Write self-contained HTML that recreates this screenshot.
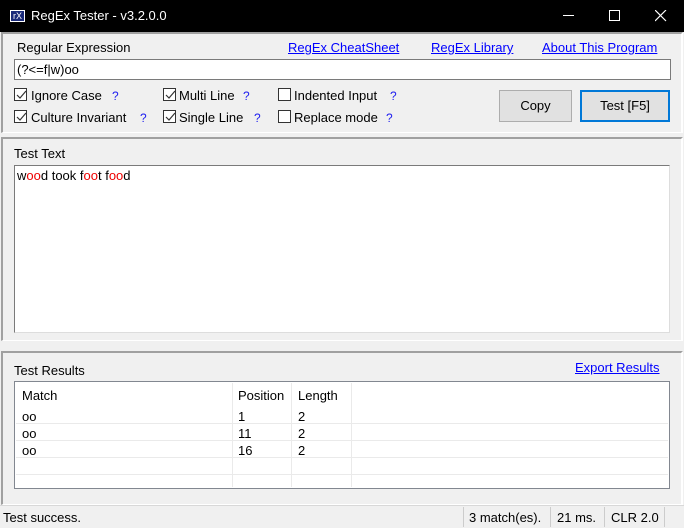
<!DOCTYPE html><html><head><style>
*{margin:0;padding:0;box-sizing:border-box}
body{width:684px;height:528px;background:#f0f0f0;font-family:"Liberation Sans",sans-serif;font-size:13px;color:#000;position:relative;overflow:hidden}
.a{position:absolute;white-space:nowrap}
.lk{color:#0000ff;text-decoration:underline}
.cb{position:absolute;width:13px;height:13px;border:1px solid #333;background:#fff}
.cb svg{position:absolute;left:1px;top:1px}
.q{color:#1c1cf0;position:absolute;font-size:12px}
.panel{position:absolute;left:1px;right:1px;border-top:2px solid #a0a0a0;border-left:2px solid #a0a0a0;border-right:2px solid #fff;border-bottom:1px solid #fff}
.row{position:absolute;left:1px;right:1px;height:17px;border-bottom:1px solid #eaeaea}
</style></head><body>
<div class="a" style="left:0;top:0;width:684px;height:32px;background:#000"></div>
<div class="a" style="left:10px;top:10px;width:15px;height:12px;border:1px solid #fff;background:#1a2a7a;color:#fff;font-size:9px;line-height:10px;text-align:center">rX</div>
<div class="a" style="left:31px;top:8px;color:#fff;font-size:13px">RegEx Tester - v3.2.0.0</div>
<div class="a" style="left:563px;top:15px;width:11px;height:1px;background:#fff"></div>
<div class="a" style="left:609px;top:10px;width:11px;height:11px;border:1px solid #fff"></div>
<svg class="a" style="left:655px;top:10px" width="12" height="12"><path d="M0 0L11 11M11 0L0 11" stroke="#fff" stroke-width="1.2"/></svg>

<div class="panel" style="top:32px;height:101px"></div>
<div class="a" style="left:17px;top:40px">Regular Expression</div>
<div class="a lk" style="left:288px;top:40px">RegEx CheatSheet</div>
<div class="a lk" style="left:431px;top:40px">RegEx Library</div>
<div class="a lk" style="left:542px;top:40px">About This Program</div>
<div class="a" style="left:14px;top:59px;width:657px;height:21px;border:1px solid #7a7a7a;background:#fff;padding:2px 2px">(?&lt;=f|w)oo</div>

<div class="cb" style="left:14px;top:88px"><svg width="11" height="11"><path d="M1 5L4 8L10 1" stroke="#333" fill="none" stroke-width="1.2"/></svg></div>
<div class="a" style="left:31px;top:88px">Ignore Case</div><div class="q" style="left:112px;top:89px">?</div>
<div class="cb" style="left:14px;top:110px"><svg width="11" height="11"><path d="M1 5L4 8L10 1" stroke="#333" fill="none" stroke-width="1.2"/></svg></div>
<div class="a" style="left:31px;top:110px">Culture Invariant</div><div class="q" style="left:140px;top:111px">?</div>
<div class="cb" style="left:163px;top:88px"><svg width="11" height="11"><path d="M1 5L4 8L10 1" stroke="#333" fill="none" stroke-width="1.2"/></svg></div>
<div class="a" style="left:179px;top:88px">Multi Line</div><div class="q" style="left:243px;top:89px">?</div>
<div class="cb" style="left:163px;top:110px"><svg width="11" height="11"><path d="M1 5L4 8L10 1" stroke="#333" fill="none" stroke-width="1.2"/></svg></div>
<div class="a" style="left:179px;top:110px">Single Line</div><div class="q" style="left:254px;top:111px">?</div>
<div class="cb" style="left:278px;top:88px"></div>
<div class="a" style="left:294px;top:88px">Indented Input</div><div class="q" style="left:390px;top:89px">?</div>
<div class="cb" style="left:278px;top:110px"></div>
<div class="a" style="left:294px;top:110px">Replace mode</div><div class="q" style="left:386px;top:111px">?</div>

<div class="a" style="left:499px;top:90px;width:73px;height:32px;background:#e1e1e1;border:1px solid #adadad;text-align:center;line-height:30px">Copy</div>
<div class="a" style="left:580px;top:90px;width:90px;height:32px;background:#e1e1e1;border:2px solid #0078d7;text-align:center;line-height:28px">Test [F5]</div>

<div class="panel" style="top:137px;height:204px"></div>
<div class="a" style="left:14px;top:146px">Test Text</div>
<div class="a" style="left:14px;top:165px;width:656px;height:168px;border:1px solid #7a7a7a;border-right-color:#ddd;border-bottom-color:#ddd;background:#fff;padding:2px 2px">w<span style="color:#e00">oo</span>d took f<span style="color:#e00">oo</span>t f<span style="color:#e00">oo</span>d</div>

<div class="panel" style="top:351px;height:154px"></div>
<div class="a" style="left:14px;top:363px">Test Results</div>
<div class="a lk" style="left:575px;top:360px">Export Results</div>
<div class="a" style="left:14px;top:381px;width:656px;height:108px;border:1px solid #828790;background:#fff">
 <div class="a" style="left:7px;top:6px">Match</div>
 <div class="a" style="left:223px;top:6px">Position</div>
 <div class="a" style="left:283px;top:6px">Length</div>
 <div class="a" style="left:217px;top:1px;width:1px;height:104px;background:#eaeaea"></div>
 <div class="a" style="left:276px;top:1px;width:1px;height:104px;background:#eaeaea"></div>
 <div class="a" style="left:336px;top:1px;width:1px;height:104px;background:#eaeaea"></div>
 <div class="row" style="top:25px"><span class="a" style="left:6px;top:2px">oo</span><span class="a" style="left:222px;top:2px">1</span><span class="a" style="left:282px;top:2px">2</span></div>
 <div class="row" style="top:42px"><span class="a" style="left:6px;top:2px">oo</span><span class="a" style="left:222px;top:2px">11</span><span class="a" style="left:282px;top:2px">2</span></div>
 <div class="row" style="top:59px"><span class="a" style="left:6px;top:2px">oo</span><span class="a" style="left:222px;top:2px">16</span><span class="a" style="left:282px;top:2px">2</span></div>
 <div class="row" style="top:76px"></div>
</div>

<div class="a" style="left:0;top:505px;width:684px;height:23px;background:#f0f0f0;border-top:1px solid #d8d8d8"></div>
<div class="a" style="left:3px;top:510px">Test success.</div>
<div class="a" style="left:463px;top:507px;width:1px;height:20px;background:#ccc"></div>
<div class="a" style="left:469px;top:510px">3 match(es).</div>
<div class="a" style="left:550px;top:507px;width:1px;height:20px;background:#ccc"></div>
<div class="a" style="left:557px;top:510px">21 ms.</div>
<div class="a" style="left:604px;top:507px;width:1px;height:20px;background:#ccc"></div>
<div class="a" style="left:611px;top:510px">CLR 2.0</div>
<div class="a" style="left:664px;top:507px;width:1px;height:20px;background:#ccc"></div>
</body></html>
